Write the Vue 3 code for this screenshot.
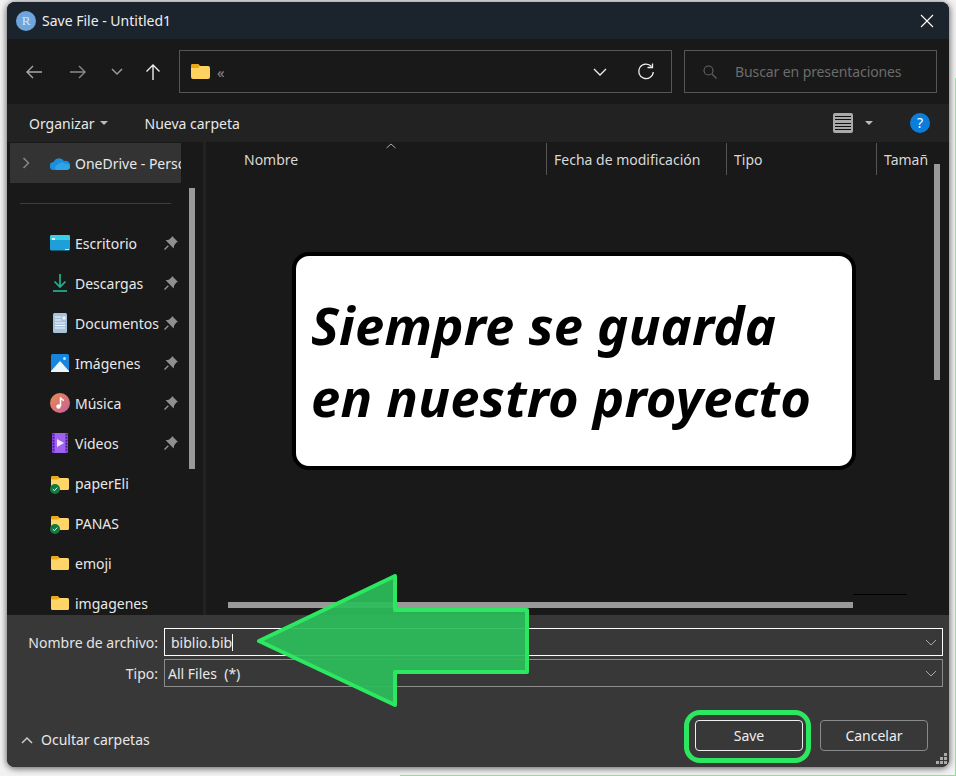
<script setup>
const places = [
  { name: "Escritorio", icon: "desk", pin: true },
  { name: "Descargas", icon: "down", pin: true },
  { name: "Documentos", icon: "doc", pin: true },
  { name: "Imágenes", icon: "img", pin: true },
  { name: "Música", icon: "music", pin: true },
  { name: "Videos", icon: "video", pin: true },
  { name: "paperEli", icon: "folder", check: true },
  { name: "PANAS", icon: "folder", check: true },
  { name: "emoji", icon: "folder" },
  { name: "imgagenes", icon: "folder" },
]
const columns = [
  { name: "Nombre", width: 341, pad: 38 },
  { name: "Fecha de modificación", width: 180, pad: 7 },
  { name: "Tipo", width: 150, pad: 7 },
  { name: "Tamañ", width: 51, pad: 7 },
]
</script>

<template>
<div class="page">
  <div class="win">
    <div class="title">
      <div class="rlogo">R</div>
      <span>Save File - Untitled1</span>
      <svg class="close" width="14" height="14" viewBox="0 0 14 14"><path d="M1 1L13 13M13 1L1 13" stroke="#fff" stroke-width="1.1" fill="none"/></svg>
    </div>

    <div class="nav">
      <svg class="nb" width="18" height="16" viewBox="0 0 18 16"><path d="M17 8H2M8 2L2 8L8 14" stroke="#a8a8a8" stroke-width="1.4" fill="none"/></svg>
      <svg class="nb fwd" width="18" height="16" viewBox="0 0 18 16"><path d="M1 8H16M10 2L16 8L10 14" stroke="#8a8a8a" stroke-width="1.4" fill="none"/></svg>
      <svg class="nb drop" width="12" height="8" viewBox="0 0 12 8"><path d="M1 1L6 6L11 1" stroke="#9a9a9a" stroke-width="1.5" fill="none"/></svg>
      <svg class="nb up" width="16" height="18" viewBox="0 0 16 18"><path d="M8 17V2M1.5 8.5L8 2L14.500 8.500" stroke="#eee" stroke-width="1.4" fill="none"/></svg>
      <div class="addr">
        <svg width="19" height="15" viewBox="0 0 19 15"><path d="M0 2Q0 0 2 0H7L9 2H17Q19 2 19 4V13Q19 15 17 15H2Q0 15 0 13Z" fill="#ffd15e"/><path d="M0 2Q0 0 2 0H7L9 2L7 4H0Z" fill="#eba80f"/></svg>
        <span class="crumb">«</span>
        <svg class="addr-drop" width="14" height="8" viewBox="0 0 14 8"><path d="M1 1L7 7L13 1" stroke="#eee" stroke-width="1.300" fill="none"/></svg>
        <svg class="refresh" width="18" height="18" viewBox="0 0 18 18"><path d="M14.500 3.500A7.300 7.300 0 1 0 16.300 9" stroke="#eee" stroke-width="1.300" fill="none"/><path d="M10.500 4.500H15.500V0.500" stroke="#eee" stroke-width="1.300" fill="none"/></svg>
      </div>
      <div class="search">
        <svg width="14" height="14" viewBox="0 0 14 14"><circle cx="5.500" cy="5.500" r="4.500" stroke="#666" stroke-width="1.100" fill="none"/><path d="M9 9L13.500 13.500" stroke="#666" stroke-width="1.100"/></svg>
        <span>Buscar en presentaciones</span>
      </div>
    </div>

    <div class="tools">
      <span class="org">Organizar</span>
      <i class="caret"></i>
      <span class="newf">Nueva carpeta</span>
      <div class="viewbtn"><i></i><i></i><i></i><i></i><i></i></div>
      <i class="caret vc"></i>
      <div class="help">?</div>
    </div>

    <div class="main">
      <div class="side">
        <div class="side-top">
          <svg class="chev" width="8" height="12" viewBox="0 0 8 12"><path d="M1.500 1L6.500 6L1.500 11" stroke="#888" stroke-width="1.500" fill="none"/></svg>
          <svg width="20" height="13" viewBox="0 0 20 13"><path d="M4 13A4 4 0 0 1 3.500 5A6 6 0 0 1 14 4A4.500 4.500 0 0 1 20 9Q20 13 16 13Z" fill="#1c8fdc"/><path d="M6 13Q3 9 8 7.500Q11 4 14.500 6.500Q20 6.500 20 10Q20 13 16 13Z" fill="#2ea4ea"/></svg>
          <span class="od">OneDrive - Personal</span>
        </div>
        <div class="sep"></div>
        <div v-for="p in places" :key="p.name" class="place">
          <div class="ico">
            <svg v-if="p.icon === 'desk'" width="20" height="16" viewBox="0 0 20 16"><rect width="20" height="15.500" rx="1.500" fill="#1f9fd8"/><path d="M0 1.500Q0 0 1.500 0H18.500Q20 0 20 1.500V5H0Z" fill="#38cfe9"/><rect x="2" y="3" width="3" height="2" fill="#d8f5fb"/><rect x="15" y="14" width="4" height="1" fill="#c9eef8"/></svg>
            <svg v-else-if="p.icon === 'down'" width="16" height="18" viewBox="0 0 16 18"><path d="M8 0V13M2.500 7.500L8 13L13.500 7.500" stroke="#23b28f" stroke-width="1.700" fill="none"/><path d="M1 17H15" stroke="#23b28f" stroke-width="1.700"/></svg>
            <svg v-else-if="p.icon === 'doc'" width="14" height="20" viewBox="0 0 14 20"><rect width="14" height="20" rx="1.500" fill="#a9c2dc"/><path d="M2 4H8M2 7H8M2 10H12M2 12.500H12M2 15H12" stroke="#f1f6fb" stroke-width="1"/><rect x="9.500" y="3.500" width="3" height="3" fill="#f1f6fb"/></svg>
            <svg v-else-if="p.icon === 'img'" width="18" height="18" viewBox="0 0 18 18"><rect width="18" height="18" rx="1.500" fill="#1785dd"/><path d="M0 17L9 7L18 17V18H0Z" fill="#eaf5fc"/><circle cx="13.500" cy="4.500" r="1.500" fill="#bfe3fa"/></svg>
            <svg v-else-if="p.icon === 'music'" width="20" height="20" viewBox="0 0 20 20"><defs><linearGradient id="mg" x1="0" y1="0" x2="1" y2="1"><stop offset="0" stop-color="#ee8a4e"/><stop offset="1" stop-color="#c4609a"/></linearGradient></defs><circle cx="10" cy="10" r="10" fill="url(#mg)"/><path d="M10.500 4.500V13" stroke="#fff" stroke-width="1.500"/><path d="M10.500 4.500Q11.500 7 14 7.500" stroke="#fff" stroke-width="1.500" fill="none"/><circle cx="8.500" cy="13.500" r="2.200" fill="#fff"/></svg>
            <svg v-else-if="p.icon === 'video'" width="16" height="20" viewBox="0 0 16 20"><rect width="16" height="20" rx="1" fill="#8b45e0"/><rect x="3" width="10" height="20" fill="#9d63ee"/><path d="M5 6L12 10L5 14Z" fill="#efe6fc"/><path d="M1.500 1V19M14.500 1V19" stroke="#3f1d86" stroke-width="1.400" stroke-dasharray="1.500 1.500"/></svg>
            <svg v-else width="18" height="14" viewBox="0 0 18 14"><path d="M0 2Q0 0 2 0H6.500L8.500 2H16.500Q18 2 18 3.500V12.500Q18 14 16.500 14H1.500Q0 14 0 12.500Z" fill="#ffd567"/><path d="M0 2Q0 0 2 0H6.500L8.500 2L6.500 3.500H0Z" fill="#ecab12"/></svg>
            <svg v-if="p.check" class="check" width="10" height="10" viewBox="0 0 10 10"><circle cx="5" cy="5" r="5" fill="#0f7b3f"/><path d="M2.800 5.200L4.400 6.700L7.200 3.600" stroke="#dff" stroke-width="1" fill="none"/></svg>
          </div>
          <span>{{ p.name }}</span>
          <svg v-if="p.pin" class="pin" width="14" height="14" viewBox="0 0 13 13"><path d="M7.500 0L13 5.500L11.500 6L9.500 8.500L9 11.500L1.500 4L4.500 3.500L7 1.500Z" fill="#8f8f8f"/><path d="M4 9L0.500 12.500" stroke="#8f8f8f" stroke-width="1.400"/></svg>
        </div>
        <div class="side-bar"></div>
      </div>

      <div class="files">
        <div class="head">
          <div v-for="c in columns" :key="c.name" class="col" :style="{ width: c.width + 'px', paddingLeft: c.pad + 'px' }">{{ c.name }}</div>
          <svg class="sort" width="10" height="6" viewBox="0 0 10 6"><path d="M0.500 5L5 1L9.500 5" stroke="#aaa" stroke-width="1" fill="none"/></svg>
        </div>
        <div class="vbar"></div>
        <div class="hbar"></div>
        <div class="blackline"></div>
      </div>
    </div>

    <div class="bottom">
      <div class="field">
        <label>Nombre de archivo:</label>
        <div class="box active">
          <span class="val">biblio.bib</span><i class="cursor"></i>
          <svg class="dd" width="12" height="7" viewBox="0 0 12 7"><path d="M1 1L6 6L11 1" stroke="#aaa" stroke-width="1" fill="none"/></svg>
        </div>
      </div>
      <div class="field f2">
        <label>Tipo:</label>
        <div class="box">
          <span class="val2">All Files&nbsp; (*)</span>
          <svg class="dd" width="12" height="7" viewBox="0 0 12 7"><path d="M1 1L6 6L11 1" stroke="#aaa" stroke-width="1" fill="none"/></svg>
        </div>
      </div>
      <div class="foot">
        <svg class="up-chev" width="12" height="8" viewBox="0 0 12 8"><path d="M1 7L6 2L11 7" stroke="#ccc" stroke-width="1.500" fill="none"/></svg>
        <span class="hide">Ocultar carpetas</span>
        <div class="btn primary">Save</div>
        <div class="btn">Cancelar</div>
      </div>
      <svg class="grip" width="12" height="12" viewBox="0 0 12 12"><path d="M9 0h3v3H9zM5 4h3v3H5zM9 4h3v3H9zM1 8h3v3H1zM5 8h3v3H5zM9 8h3v3H9z" fill="#aaa"/></svg>
    </div>
  </div>

  <div class="note">Siempre se guarda<br>en nuestro proyecto</div>
  <svg class="arrow" width="280" height="138" viewBox="0 0 280 138">
    <path d="M3 67L139 2V36H271V98H139V131Z" fill="#2dbd5a" fill-opacity="0.93" stroke="#2be860" stroke-width="4" stroke-linejoin="round"/>
  </svg>
  <div class="ring"></div>
  <!-- restos de la captura alrededor de la ventana -->
  <div class="edge-right"></div>
  <div class="edge-bottom"></div>
</div>
</template>

<style scoped>
.page {
  position: relative;
  width: 956px;
  height: 776px;
  box-sizing: border-box;
  padding: 2px 7px 0 7px;
  background: #f2f2f2;
  overflow: hidden;
  font-family: "Noto Sans", "Open Sans", sans-serif;
  font-size: 14px;
  color: #e8e8e8;
}
.win {
  width: 942px;
  height: 765px;
  border-radius: 8px;
  overflow: hidden;
  background: #191919;
  box-shadow: 0 1px 6px 1px rgba(0, 0, 0, 0.55);
  display: flex;
  flex-direction: column;
}
.title {
  height: 37px;
  flex: none;
  background: #1b232d;
  display: flex;
  align-items: center;
  padding-left: 9px;
  gap: 6px;
  font-size: 14px;
  color: #eee;
}
.rlogo {
  width: 20px;
  height: 20px;
  border-radius: 50%;
  background: #6ea5dc;
  color: #d6e6f6;
  font-family: "Liberation Serif", serif;
  font-size: 13px;
  text-align: center;
  line-height: 19px;
}
.close { margin-left: auto; margin-right: 15px; }
.nav {
  height: 65px;
  flex: none;
  display: flex;
  align-items: center;
  background: #191919;
}
.nb { flex: none; }
.nav .nb:first-child { margin-left: 18px; }
.fwd { margin-left: 26px; }
.drop { margin-left: 24px; }
.up { margin-left: 22px; }
.addr {
  width: 493px;
  height: 43px;
  margin-left: 18px;
  box-sizing: border-box;
  border: 1px solid #565656;
  display: flex;
  align-items: center;
  padding-left: 11px;
}
.crumb { margin-left: 7px; color: #8a8a8a; font-size: 15px; }
.addr-drop { margin-left: auto; }
.refresh { margin: 0 16px 0 30px; }
.search {
  width: 253px;
  height: 43px;
  margin-left: 12px;
  box-sizing: border-box;
  border: 1px solid #565656;
  display: flex;
  align-items: center;
  padding-left: 18px;
  gap: 18px;
  color: #6c6c6c;
  letter-spacing: -0.1px;
}
.tools {
  height: 38px;
  flex: none;
  background: #222;
  display: flex;
  align-items: center;
  padding-left: 22px;
}
.caret {
  width: 0;
  height: 0;
  border-left: 4.500px solid transparent;
  border-right: 4.500px solid transparent;
  border-top: 4.500px solid #bbb;
  margin-left: 5px;
}
.newf { margin-left: 37px; }
.viewbtn {
  margin-left: auto;
  width: 20px;
  height: 20px;
  background: #aaa;
  border-radius: 2px;
  box-sizing: border-box;
  padding: 3px 2px;
  display: flex;
  flex-direction: column;
  justify-content: space-between;
}
.viewbtn i { height: 1px; background: #111; display: block; }
.vc { margin-left: 12px; }
.help {
  margin: 0 19px 0 37px;
  width: 20px;
  height: 20px;
  border-radius: 50%;
  background: #0b7ddb;
  color: #fff;
  font-size: 14px;
  line-height: 20px;
  text-align: center;
}
.main {
  flex: none;
  height: 473px;
  display: flex;
  background: #191919;
}
.side {
  position: relative;
  width: 196px;
  flex: none;
  overflow: hidden;
  border-right: 3px solid #222;
}
.side-top {
  width: 171px;
  height: 40px;
  margin: 1px 0 0 3px;
  background: #333;
  display: flex;
  align-items: center;
  white-space: nowrap;
  overflow: hidden;
  padding-left: 12px;
  box-sizing: border-box;
}
.chev { margin-right: 20px; flex: none; }
.side-top svg + svg { margin-right: 5px; flex: none; }
.sep {
  height: 1px;
  width: 151px;
  margin: 20px 0 19px 13px;
  background: #3c3c3c;
}
.place {
  height: 40px;
  display: flex;
  align-items: center;
  white-space: nowrap;
  position: relative;
}
.ico {
  width: 20px;
  height: 20px;
  margin-left: 43px;
  margin-right: 5px;
  display: flex;
  align-items: center;
  justify-content: center;
  position: relative;
  flex: none;
}
.check { position: absolute; left: 0; bottom: -1px; }
.pin { position: absolute; left: 157px; top: 13px; }
.side-bar {
  position: absolute;
  left: 182px;
  top: 46px;
  width: 6px;
  height: 281px;
  background: #999;
}
.files {
  position: relative;
  flex: 1;
  min-width: 0;
}
.head {
  display: flex;
  height: 35px;
  padding-top: 1px;
  overflow: hidden;
  position: relative;
  color: #d8d8d8;
}
.col {
  flex: none;
  box-sizing: border-box;
  height: 32px;
  line-height: 34px;
  border-right: 1px solid #555;
  white-space: nowrap;
  overflow: hidden;
}
.col:last-of-type { border-right: none; }
.sort { position: absolute; left: 180px; top: 1px; }
.vbar {
  position: absolute;
  left: 728px;
  top: 22px;
  width: 6px;
  height: 216px;
  background: #999;
}
.hbar {
  position: absolute;
  left: 22px;
  top: 460px;
  width: 625px;
  height: 6px;
  background: #999;
}
.blackline {
  position: absolute;
  left: 647px;
  top: 452px;
  width: 54px;
  height: 1px;
  background: #000;
}
.bottom {
  flex: 1;
  position: relative;
  background: #383838;
  padding-top: 13px;
}
.field {
  display: flex;
  height: 28px;
  align-items: center;
}
.f2 { margin-top: 3px; }
.field label {
  width: 151px;
  text-align: right;
  margin-right: 6px;
  color: #e4e4e4;
  flex: none;
}
.box {
  width: 779px;
  height: 28px;
  box-sizing: border-box;
  border: 1px solid #8c8c8c;
  display: flex;
  align-items: center;
  position: relative;
}
.box.active { border-color: #fff; }
.val { margin-left: 6px; }
.val2 { margin-left: 3px; }
.cursor { width: 1px; height: 17px; background: #fff; display: block; }
.dd { position: absolute; right: 5px; top: 10px; }
.foot {
  display: flex;
  align-items: center;
  margin-top: 33px;
  padding-left: 14px;
}
.up-chev { margin-top: 8px; }
.hide { margin: 8px 0 0 8px; }
.btn {
  width: 108px;
  height: 31px;
  box-sizing: border-box;
  border: 1px solid #8a8a8a;
  border-radius: 4px;
  text-align: center;
  line-height: 29px;
  color: #eee;
}
.primary { margin-left: auto; border-color: #eee; }
.btn + .btn { margin: 0 21px 0 17px; }
.grip { position: absolute; right: 2px; bottom: 2px; }
.note {
  position: absolute;
  left: 292px;
  top: 252px;
  width: 564px;
  height: 218px;
  box-sizing: border-box;
  background: #fff;
  border: 4px solid #000;
  border-radius: 17px;
  padding: 33px 0 0 15px;
  color: #000;
  font-size: 52.5px;
  font-weight: 700;
  font-style: italic;
  letter-spacing: 0.25px;
  line-height: 72px;
  white-space: nowrap;
}
.arrow {
  position: absolute;
  left: 256px;
  top: 574px;
}
.ring {
  position: absolute;
  left: 684px;
  top: 710px;
  width: 127px;
  height: 53px;
  box-sizing: border-box;
  border: 5px solid #2be860;
  border-radius: 16px;
}
.edge-right {
  position: absolute;
  right: 0;
  top: 78px;
  bottom: 0;
  width: 1px;
  background: #7fe69c;
}
.edge-bottom {
  position: absolute;
  left: 400px;
  right: 0;
  bottom: 0;
  height: 1px;
  background: #7fe69c;
}
</style>

<style>
html, body { margin: 0; background: #f2f2f2; }
</style>
